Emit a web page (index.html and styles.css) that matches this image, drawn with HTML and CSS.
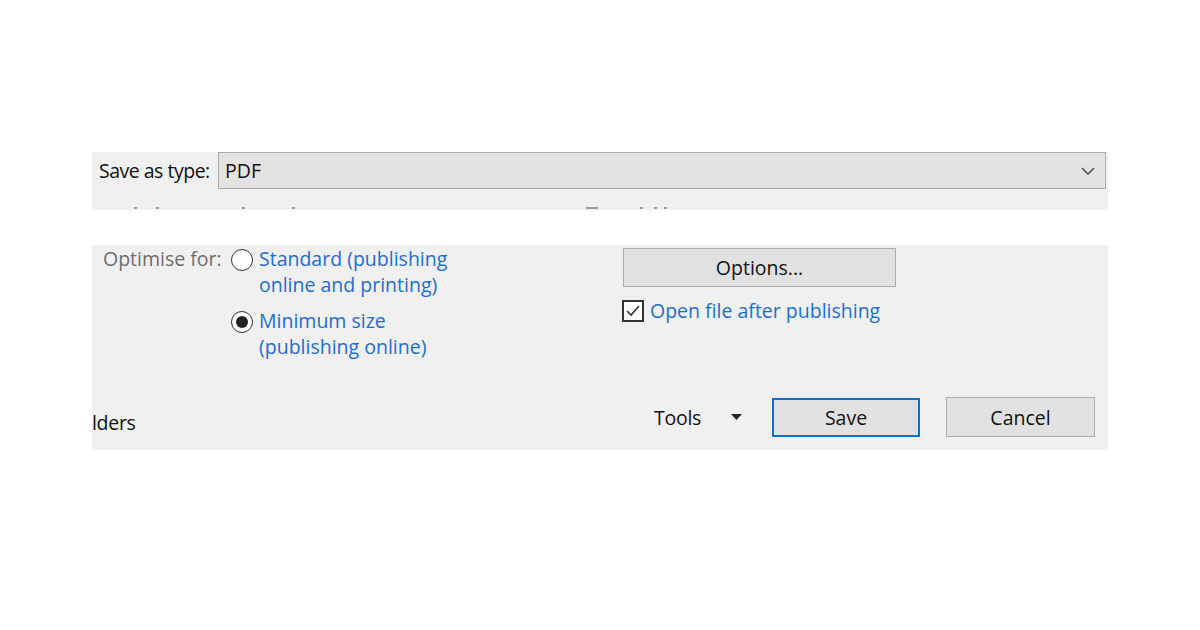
FILE: index.html
```html
<!DOCTYPE html>
<html lang="en">
<head>
  <meta charset="UTF-8">
  <title>Save as PDF</title>
  <link rel="stylesheet" href="styles.css">
</head>
<body>
  <div class="dialog">
    <div class="panel top">
      <div class="type-row">
        <span class="label">Save as type:</span>
        <div class="select">
          <span>PDF</span>
          <svg class="chevron" width="14" height="8" viewBox="0 0 14 8"><path d="M1 1 L7 7 L13 1" fill="none" stroke="#404040" stroke-width="1.4"/></svg>
        </div>
      </div>
      <div class="cut">
        <i style="left:42px"></i><i style="left:64px"></i><i style="left:150px"></i><i style="left:200px"></i>
        <i class="long" style="left:494px"></i><i style="left:548px"></i><i style="left:562px"></i><i style="left:572px"></i>
      </div>
    </div>

    <div class="panel bottom">
      <div class="options">
        <div class="optimise">
          <span class="muted">Optimise for:</span>
          <div class="radios">
            <label class="radio">
              <span class="dot"></span>
              <span class="blue">Standard (publishing<br>online and printing)</span>
            </label>
            <label class="radio">
              <span class="dot on"></span>
              <span class="blue">Minimum size<br>(publishing online)</span>
            </label>
          </div>
        </div>
        <div class="right">
          <button class="btn options-btn">Options...</button>
          <label class="check">
            <svg width="22" height="22" viewBox="0 0 22 22"><rect x="1" y="1" width="20" height="20" fill="#fff" stroke="#333" stroke-width="2"/><path d="M5 11 L9 15 L17 6" fill="none" stroke="#333" stroke-width="1.6"/></svg>
            <span class="blue">Open file after publishing</span>
          </label>
        </div>
      </div>

      <div class="footer">
        <span class="folders">lders</span>
        <div class="actions">
          <span class="tools">Tools</span>
          <svg class="caret" width="11" height="6" viewBox="0 0 11 6"><path d="M0 0 L11 0 L5.5 6 Z" fill="#222"/></svg>
          <button class="btn save">Save</button>
          <button class="btn cancel">Cancel</button>
        </div>
      </div>
    </div>
  </div>
</body>
</html>
```

FILE: styles.css
```css
* {
  margin: 0;
  padding: 0;
  box-sizing: border-box;
}

body {
  background: #fff;
  font-family: 'Open Sans', 'Noto Sans', sans-serif;
  font-size: 19.5px;
  color: #111;
}

.dialog {
  width: 1016px;
  margin: 152px 0 0 92px;
}

.panel {
  background: #f0f0f0;
}

.top {
  height: 58px;
}

.type-row {
  display: flex;
  align-items: center;
  height: 37px;
}

.label {
  width: 126px;
  padding-left: 7px;
  letter-spacing: -0.5px;
}

.select {
  flex: 1;
  height: 37px;
  margin-right: 2px;
  background: #e3e3e3;
  border: 1px solid #acacac;
  display: flex;
  align-items: center;
  justify-content: space-between;
  padding: 0 10px 0 6px;
}

.cut {
  position: relative;
  height: 21px;
}

.cut i {
  position: absolute;
  top: 18px;
  width: 3px;
  height: 2px;
  background: #9a9a9a;
}

.cut i.long {
  width: 12px;
}

.bottom {
  margin-top: 35px;
  height: 205px;
}

.options {
  display: flex;
  height: 152px;
}

.optimise {
  display: flex;
  width: 530px;
  padding: 1px 0 0 11px;
}

.muted {
  color: #6d6d6d;
  letter-spacing: 0;
  width: 128px;
  line-height: 26px;
}

.radios {
  display: flex;
  flex-direction: column;
  gap: 10px;
}

.radio {
  display: flex;
  gap: 6px;
  line-height: 26px;
}

.dot {
  width: 22px;
  height: 22px;
  margin-top: 3px;
  border: 1.5px solid #333;
  border-radius: 50%;
  background: #fff;
  display: flex;
  align-items: center;
  justify-content: center;
}

.dot.on::after {
  content: '';
  width: 12px;
  height: 12px;
  border-radius: 50%;
  background: #222;
}

.blue {
  color: #1c6dd0;
}

.right {
  display: flex;
  flex-direction: column;
  padding-top: 3px;
}

.btn {
  font-family: inherit;
  font-size: 19.5px;
  color: #111;
  background: #e1e1e1;
  border: 1px solid #adadad;
}

.options-btn {
  width: 273px;
  height: 39px;
  margin-left: 1px;
}

.check {
  display: flex;
  align-items: center;
  gap: 6px;
  margin-top: 10px;
}

.footer {
  display: flex;
  justify-content: space-between;
  align-items: center;
  padding-right: 13px;
}

.folders {
  margin-top: 10px;
  letter-spacing: -0.3px;
}

.actions {
  display: flex;
  align-items: center;
}

.tools {
  margin-left: 2px;
  margin-right: 30px;
  letter-spacing: -0.3px;
}

.caret {
  margin-right: 30px;
}

.save {
  width: 148px;
  height: 39px;
  border: 2px solid #0a6fd0;
  margin-right: 26px;
}

.cancel {
  width: 149px;
  height: 40px;
}
```
